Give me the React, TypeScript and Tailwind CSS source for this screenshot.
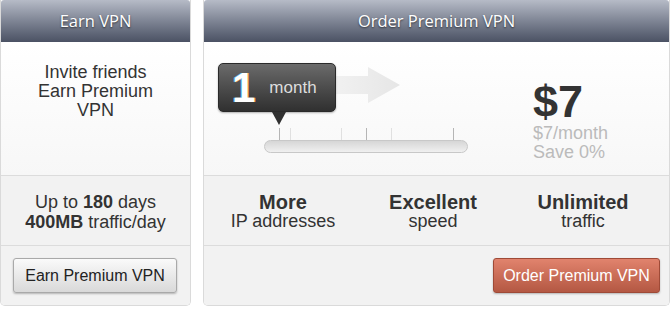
export default function App() {
  const ticks = [
    { x: 75, dark: true },
    { x: 86, dark: false },
    { x: 137, dark: false },
    { x: 162, dark: true },
    { x: 187, dark: false },
    { x: 249, dark: true },
  ];

  const features = [
    { title: 'More', sub: 'IP addresses' },
    { title: 'Excellent', sub: 'speed' },
    { title: 'Unlimited', sub: 'traffic' },
  ];

  const head =
    "h-[42px] flex items-center justify-center text-white text-[16.5px] [text-shadow:0_1px_2px_rgba(0,0,0,0.6)] bg-gradient-to-b from-[#b6bbc7] to-[#4b5264] font-['Open_Sans',sans-serif] rounded-t-[3px]";

  return (
    <div className="w-[672px] h-[310px] bg-white flex gap-3 pr-[2px] font-['Liberation_Sans',Arial,sans-serif] text-[#333]">
      {/* Earn VPN */}
      <div className="w-[191px] h-[306px] flex flex-col border border-t-0 border-[#dadada] rounded-b-[5px] overflow-hidden">
        <div className={head}>Earn VPN</div>
        <div className="h-[133px] bg-gradient-to-b from-white to-[#f7f7f7] flex justify-center pt-[21px]">
          <p className="w-[130px] text-center text-[18px] leading-[19px]">
            Invite friends Earn Premium VPN
          </p>
        </div>
        <div className="h-[70px] border-t border-[#dcdcdc] bg-[#f2f2f2] flex flex-col items-center justify-center text-[18px] leading-[20px] pt-[2px]">
          <div>
            Up to <b>180</b> days
          </div>
          <div>
            <b>400MB</b> traffic/day
          </div>
        </div>
        <div className="flex-1 border-t border-[#dcdcdc] bg-[#f2f2f2] px-3 pt-3">
          <button className="w-[164px] h-[35px] rounded-[3px] border border-[#a9a9a9] bg-gradient-to-b from-[#fafafa] to-[#d9d9d9] shadow-[0_1px_2px_rgba(0,0,0,0.25)] text-[16px] text-[#222]">
            Earn Premium VPN
          </button>
        </div>
      </div>

      {/* Order Premium VPN */}
      <div className="flex-1 h-[306px] flex flex-col border border-t-0 border-[#dadada] rounded-b-[5px] overflow-hidden">
        <div className={head}>Order Premium VPN</div>
        <div className="h-[133px] bg-gradient-to-b from-white to-[#f7f7f7] flex">
          <div className="relative w-[314px] h-full">
            {/* faint arrow */}
            <svg className="absolute left-[120px] top-[25px]" width="78" height="36" viewBox="0 0 78 36">
              <defs>
                <linearGradient id="arr" x1="0" x2="1" y1="0" y2="0">
                  <stop offset="0" stopColor="#f3f3f3" />
                  <stop offset="1" stopColor="#e6e6e6" />
                </linearGradient>
              </defs>
              <path d="M0 9 H44 V0 L76 18 L44 36 V27 H0 Z" fill="url(#arr)" />
            </svg>
            {/* tooltip */}
            <div className="absolute left-[14px] top-[21px] w-[118px] h-[49px] rounded-[5px] border border-[#2a2a2a] bg-gradient-to-b from-[#6b6b6b] to-[#303030] shadow-[0_1px_2px_rgba(0,0,0,0.3)] flex items-center">
              <span className="ml-[13px] text-[42px] leading-none font-bold text-white [text-shadow:-1px_0_0_#5ab4e0,1px_0_0_#f2a24a]">
                1
              </span>
              <span className="ml-[14px] text-[17px] text-[#ddd]">month</span>
            </div>
            <div className="absolute left-[68px] top-[70px] w-0 h-0 border-l-[7px] border-r-[7px] border-t-[13px] border-l-transparent border-r-transparent border-t-[#303030]" />
            {/* ticks */}
            {ticks.map((t) => (
              <div
                key={t.x}
                className={`absolute top-[86px] h-[12px] w-px ${t.dark ? 'bg-[#b5b5b5]' : 'bg-[#e0e0e0]'}`}
                style={{ left: t.x }}
              />
            ))}
            {/* track */}
            <div className="absolute left-[60px] top-[98px] w-[204px] h-[13px] rounded-full border border-[#c8c8c8] bg-gradient-to-b from-[#d6d6d6] to-[#f0f0f0]" />
          </div>
          <div className="pl-[15px] pt-[37px]">
            <div className="text-[45px] font-bold text-[#333] leading-[45px]">$7</div>
            <div className="text-[18px] text-[#bbb] leading-[19px]">$7/month</div>
            <div className="text-[18px] text-[#bbb] leading-[19px]">Save 0%</div>
          </div>
        </div>
        <div className="h-[70px] border-t border-[#dcdcdc] bg-[#f2f2f2] flex items-center pl-[4px]">
          {features.map((f) => (
            <div key={f.title} className="w-[150px] text-center">
              <div className="text-[20px] font-bold leading-[20px]">{f.title}</div>
              <div className="text-[18px] leading-[18px]">{f.sub}</div>
            </div>
          ))}
        </div>
        <div className="flex-1 border-t border-[#dcdcdc] bg-[#f2f2f2] flex justify-end pr-[9px] pt-3">
          <button className="w-[167px] h-[35px] rounded-[3px] border border-[#9f4a37] bg-gradient-to-b from-[#e1836d] to-[#b45843] shadow-[0_1px_2px_rgba(0,0,0,0.25)] text-[16px] text-white">
            Order Premium VPN
          </button>
        </div>
      </div>
    </div>
  );
}
